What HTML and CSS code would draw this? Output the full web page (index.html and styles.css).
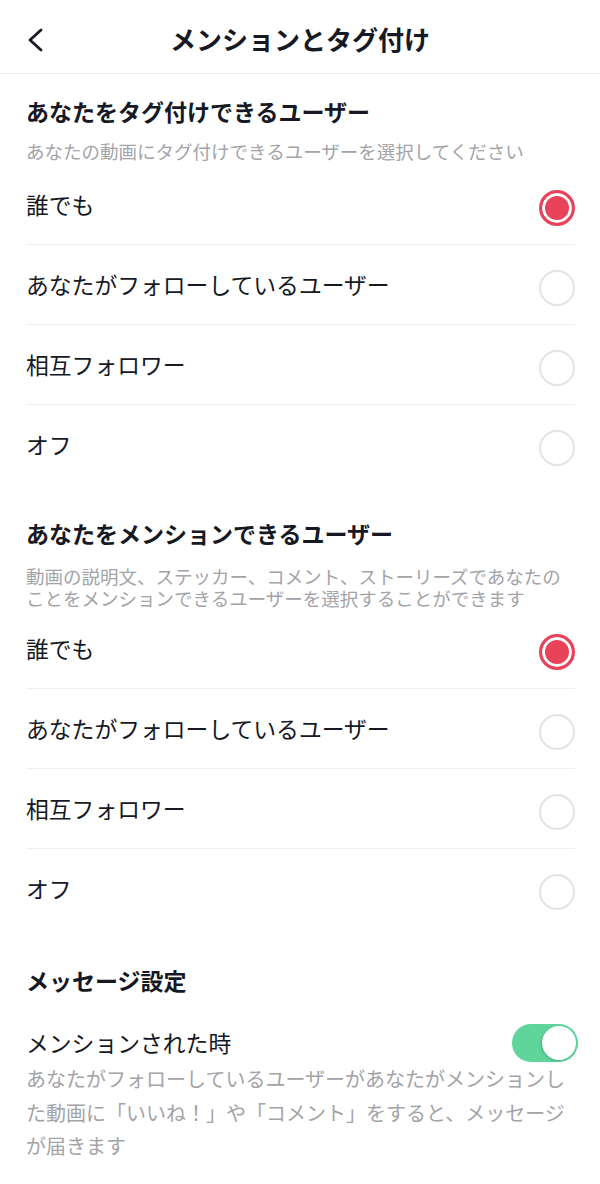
FILE: index.html
```html
<!DOCTYPE html>
<html lang="ja">
<head>
<meta charset="utf-8">
<title>メンションとタグ付け</title>
<link rel="stylesheet" href="styles.css">
</head>
<body>
<header class="topbar">
  <div class="back">
    <svg width="18" height="24" viewBox="0 0 18 24"><polyline points="15,2 4,12 15,22" fill="none" stroke="#161823" stroke-width="2.8" stroke-linecap="round" stroke-linejoin="round"/></svg>
  </div>
  <h1 class="topbar-title">メンションとタグ付け</h1>
  <div class="spacer"></div>
</header>

<section class="section s1">
  <h2 class="sec-title">あなたをタグ付けできるユーザー</h2>
  <p class="sec-sub">あなたの動画にタグ付けできるユーザーを選択してください</p>
  <ul class="options">
    <li class="option"><span class="opt-label">誰でも</span><span class="radio on"></span></li>
    <li class="option"><span class="opt-label">あなたがフォローしているユーザー</span><span class="radio"></span></li>
    <li class="option"><span class="opt-label">相互フォロワー</span><span class="radio"></span></li>
    <li class="option last"><span class="opt-label">オフ</span><span class="radio"></span></li>
  </ul>
</section>

<section class="section s2">
  <h2 class="sec-title">あなたをメンションできるユーザー</h2>
  <p class="sec-sub two">動画の説明文、ステッカー、コメント、ストーリーズであなたの<br>ことをメンションできるユーザーを選択することができます</p>
  <ul class="options flush">
    <li class="option"><span class="opt-label">誰でも</span><span class="radio on"></span></li>
    <li class="option"><span class="opt-label">あなたがフォローしているユーザー</span><span class="radio"></span></li>
    <li class="option"><span class="opt-label">相互フォロワー</span><span class="radio"></span></li>
    <li class="option last"><span class="opt-label">オフ</span><span class="radio"></span></li>
  </ul>
</section>

<section class="section s3">
  <h2 class="sec-title">メッセージ設定</h2>
  <div class="toggle-row">
    <span class="opt-label">メンションされた時</span>
    <span class="toggle"><span class="knob"></span></span>
  </div>
  <p class="desc">あなたがフォローしているユーザーがあなたがメンションした動画に「いいね！」や「コメント」をすると、メッセージが届きます</p>
</section>
</body>
</html>
```

FILE: styles.css
```css
* { box-sizing: border-box; }
html, body { margin: 0; padding: 0; background: #ffffff; }
body {
  font-family: "Noto Sans CJK JP", "Noto Sans", sans-serif;
  color: #161823;
  width: 600px;
}
.topbar {
  height: 74px;
  display: grid;
  grid-template-columns: 80px 1fr 80px;
  align-items: center;
  border-bottom: 1px solid #ebebeb;
}
.back {
  padding-left: 26px;
  padding-top: 6px;
  display: flex;
  align-items: center;
}
.back svg { display: block; }
.topbar-title {
  margin: 0;
  padding-top: 4px;
  text-align: center;
  font-size: 26px;
  line-height: 30px;
  font-weight: 700;
}
.section { padding: 0 25px 0 26px; }
.sec-title {
  margin: 0;
  font-size: 23px;
  line-height: 30px;
  font-weight: 700;
}
.s1 .sec-title { margin-top: 22px; }
.s2 .sec-title { margin-top: 33px; }
.s3 .sec-title { margin-top: 36px; }
.sec-sub {
  margin: 13px 0 0;
  font-size: 18.5px;
  line-height: 24px;
  color: #a3a3a8;
}
.sec-sub.two {
  margin-top: 17px;
  line-height: 22px;
}
.options {
  list-style: none;
  margin: 2px 0 0;
  padding: 0;
}
.options.flush { margin-top: 0; }
.option {
  height: 80px;
  display: flex;
  align-items: center;
  justify-content: space-between;
  border-bottom: 1px solid #f0f0f1;
}
.option.last { border-bottom: none; }
.opt-label {
  font-size: 22.8px;
  line-height: 30px;
  font-weight: 400;
}
.radio {
  width: 36px;
  height: 36px;
  border-radius: 50%;
  border: 2px solid #e3e3e4;
  margin-top: 6px;
  flex: none;
}
.radio.on {
  border: 3px solid #e9435a;
  background: #e9435a;
  box-shadow: inset 0 0 0 3px #ffffff;
}
.toggle-row {
  margin-top: 29px;
  height: 38px;
  display: flex;
  align-items: center;
  justify-content: space-between;
  margin-right: -3px;
}
.toggle {
  width: 66px;
  height: 38px;
  border-radius: 19px;
  background: #5fd59b;
  display: flex;
  align-items: center;
  justify-content: flex-end;
  padding: 2px;
}
.knob {
  width: 34px;
  height: 34px;
  border-radius: 50%;
  background: #ffffff;
  box-shadow: -1px 1px 3px rgba(0, 0, 0, 0.18);
}
.desc {
  margin: 0;
  font-size: 20px;
  line-height: 33.5px;
  color: #a3a3a8;
}
```
